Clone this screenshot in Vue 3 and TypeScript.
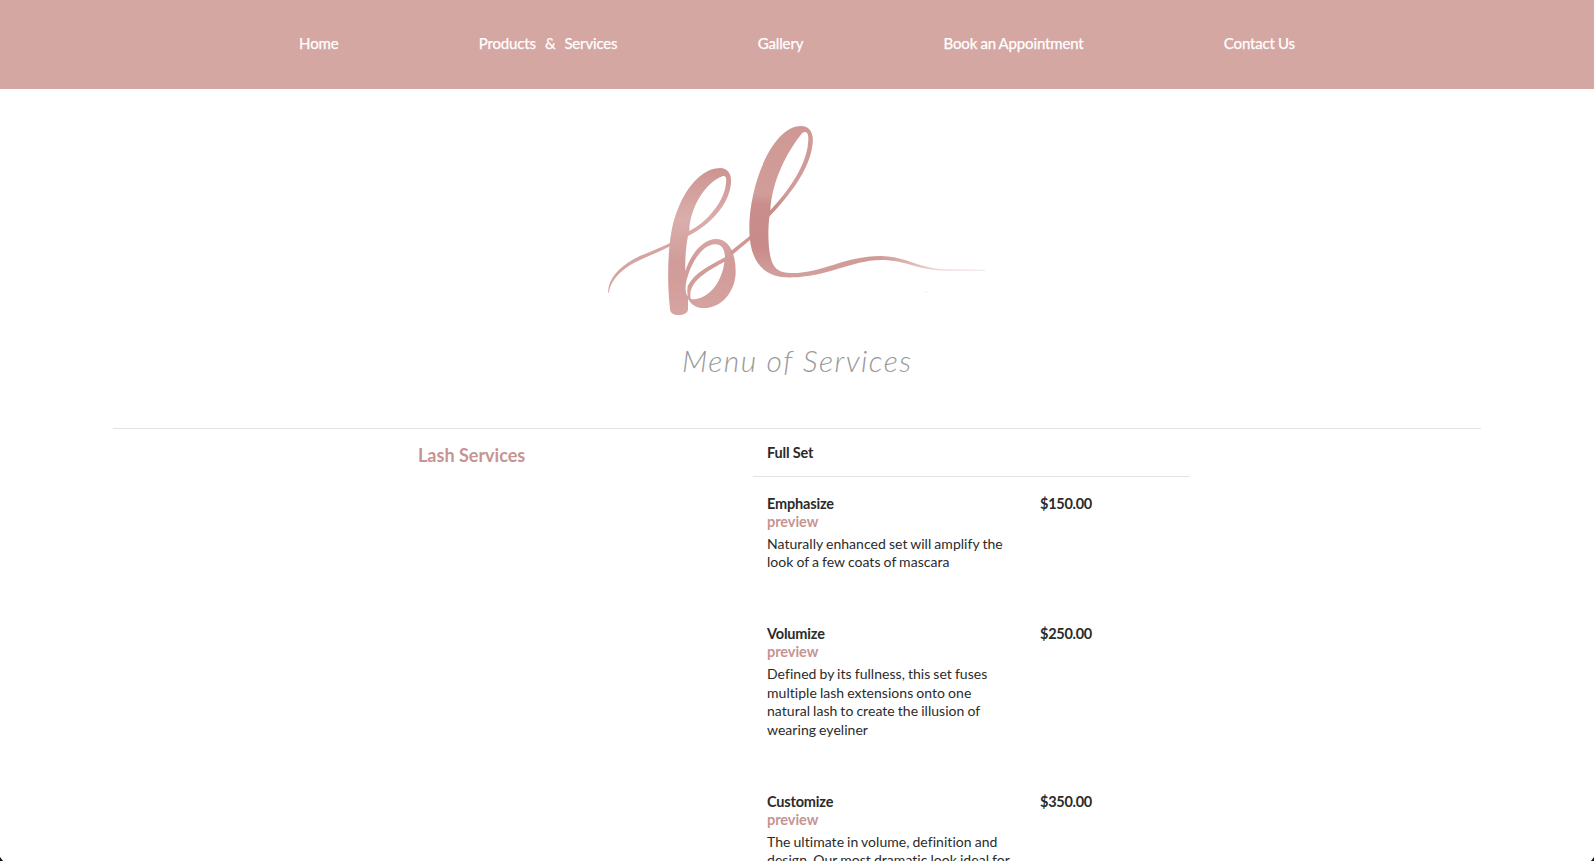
<script setup lang="ts">
interface Service {
  name: string
  price: string
  description: string
}

const links: string[] = ['Home', 'Products\u00a0 &\u00a0 Services', 'Gallery', 'Book an Appointment', 'Contact Us']

const services: Service[] = [
  { name: 'Emphasize', price: '$150.00', description: 'Naturally enhanced set will amplify the look of a few coats of mascara' },
  { name: 'Volumize', price: '$250.00', description: 'Defined by its fullness, this set fuses multiple lash extensions onto one natural lash to create the illusion of wearing eyeliner' },
  { name: 'Customize', price: '$350.00', description: 'The ultimate in volume, definition and design. Our most dramatic look ideal for' },
]
</script>

<template>
  <div class="page">
    <nav class="nav">
      <a v-for="link in links" :key="link" class="nav-link" :class="{ wide: link.includes('&') }">{{ link }}</a>
    </nav>
    <header class="brand">
      <svg class="logo" viewBox="0 0 1200 630" aria-label="bl">
        <defs>
          <linearGradient id="rose-b" x1="0" y1="159" x2="0" y2="600" gradientUnits="userSpaceOnUse">
            <stop offset="0" stop-color="#cc9491" />
            <stop offset=".35" stop-color="#dbaeab" />
            <stop offset=".65" stop-color="#d09b98" />
            <stop offset="1" stop-color="#d6a4a1" />
          </linearGradient>
          <linearGradient id="rose-l" x1="0" y1="33" x2="0" y2="487" gradientUnits="userSpaceOnUse">
            <stop offset="0" stop-color="#cf9895" />
            <stop offset=".45" stop-color="#d19d99" />
            <stop offset=".52" stop-color="#c98d8b" />
            <stop offset=".8" stop-color="#c88b89" />
            <stop offset="1" stop-color="#d3a09d" />
          </linearGradient>
          <linearGradient id="rose-tail" x1="570" y1="0" x2="1156" y2="0" gradientUnits="userSpaceOnUse">
            <stop offset="0" stop-color="#d3a09d" />
            <stop offset=".45" stop-color="#cf9a97" />
            <stop offset=".6" stop-color="#dcb3b0" />
            <stop offset=".78" stop-color="#efdcda" />
            <stop offset="1" stop-color="#f3e6e5" />
          </linearGradient>
        </defs>
        <path fill="#d5a5a2" d="M24 534 C25 490 56 458 102 432 C140 412 177 401 212 383 L212 393 C176 411 140 425 106 442 C68 462 35 489 26 533Z" />
        <path
          fill="url(#rose-b)" fill-rule="evenodd"
          d="M210 582 C202 510 202 420 214 352 C230 260 287 160 360 159 C385 160 395 178 393 203 C389 265 334 328 264 363 C257 400 255 435 256 468 C275 410 313 372 348 372 C389 372 407 417 407 470 C407 527 367 579 312 579 C289 579 272 568 264 551 L264 582 C264 595 251 600 236 600 C220 600 211 595 210 582Z
             M268 348 C269 284 312 205 367 184 C377 180 380 187 378 205 C373 262 317 325 268 348Z
             M257 512 C264 459 302 389 345 388 C364 387 374 402 375 427 C330 451 285 472 264 511 C261 518 262 530 263 544 C257 535 256 524 257 512Z
             M271 542 C270 492 335 462 373 440 C368 495 330 553 276 553 C272 552 271 548 271 542Z"
        />
        <path fill="#d09895" d="M390 410 L452 361 L453 373 L397 419Z" />
        <path
          fill="url(#rose-l)" fill-rule="evenodd"
          d="M603 33 C631 33 643 57 637 92 C628 165 567 243 508 305 C503 350 504 410 516 441 C525 464 543 475 576 474 L576 487 C495 490 450 445 448 348 C445 215 516 33 603 33Z
             M511 286 C516 198 560 112 606 55 C616 47 624 50 625 68 C626 145 565 228 511 286Z"
        />
        <path fill="url(#rose-tail)" d="M568 474 C660 478 729 424 842 423 C922 424 956 463 1045 463 L1156 464 L1156 467 L1035 467 C953 466 920 435 842 435 C755 436 672 489 568 487Z" />
        <circle cx="979" cy="531" r="2" fill="#dedede" />
      </svg>
      <svg class="tagline" viewBox="0 0 250 60">
        <text x="12" y="42" textLength="229" lengthAdjust="spacing">Menu of Services</text>
      </svg>
    </header>
    <main class="menu">
      <h2 class="category">Lash Services</h2>
      <section class="set">
        <h3 class="set-title">Full Set</h3>
        <article v-for="service in services" :key="service.name" class="service">
          <div class="details">
            <h4 class="name">{{ service.name }}</h4>
            <a class="preview">preview</a>
            <p class="description">{{ service.description }}</p>
          </div>
          <span class="price">{{ service.price }}</span>
        </article>
      </section>
    </main>
    <i class="corner left"></i>
    <i class="corner right"></i>
  </div>
</template>

<style>
body { margin: 0; overflow: hidden; }
</style>

<style scoped>
.page {
  position: relative;
  height: 861px;
  overflow: hidden;
  background: #fff;
  color: #2b2b2b;
  font-family: Lato, "Liberation Sans", sans-serif;
  font-size: 14px;
  line-height: 18.6px;
}
.nav {
  display: flex;
  justify-content: center;
  gap: 140.3px;
  height: 89px;
  padding-top: 34px;
  box-sizing: border-box;
  background: #d4a7a3;
  color: #fff;
  font-size: 15px;
  letter-spacing: -0.15px;
  word-spacing: -0.5px;
  -webkit-text-stroke: 0.25px #fff;
}
.nav-link { white-space: nowrap; }
.wide { word-spacing: 0.8px; }
.brand {
  display: flex;
  flex-direction: column;
  height: 339px;
  padding-top: 26px;
  box-sizing: border-box;
}
.logo {
  flex: none;
  width: 400px;
  height: 210px;
  margin-left: 600px;
}
.tagline {
  flex: none;
  width: 250px;
  height: 60px;
  margin: 5px 0 0 670px;
}
.tagline text {
  font-family: Lato, sans-serif;
  font-size: 30px;
  font-style: italic;
  font-weight: 300;
  fill: #999;
}
.menu {
  display: grid;
  grid-template-columns: 640px 437px;
  margin: 0 113px;
  border-top: 1px solid #e2e2e2;
}
h2, h3, h4, p { margin: 0; }
.category {
  padding: 14px 0 0 305px;
  color: #c79491;
  font-size: 18px;
  line-height: 24px;
}
.set-title {
  height: 48px;
  padding: 15px 0 0 14px;
  box-sizing: border-box;
  border-bottom: 1px solid #e2e2e2;
  font-size: 14.5px;
  letter-spacing: -0.18px;
}
.service {
  display: grid;
  grid-template-columns: 273px 1fr;
  height: 130.4px;
  padding: 18px 0 0 14px;
  box-sizing: border-box;
}
.service:nth-of-type(2) { height: 167.6px; }
.details { width: 248px; }
.name, .preview, .price {
  display: block;
  font-size: 14.5px;
  font-weight: 700;
  letter-spacing: -0.18px;
}
.name { height: 17.8px; }
.price { letter-spacing: -0.27px; }
.preview {
  color: #c79491;
  letter-spacing: -0.05px;
}
.description {
  margin-top: 3.4px;
  letter-spacing: 0.04px;
  word-spacing: -0.6px;
}
.corner {
  position: absolute;
  bottom: 0;
  width: 3px;
  height: 4px;
  background: #111;
}
.left { left: 0; clip-path: polygon(0 0, 100% 100%, 0 100%); }
.right { right: 0; clip-path: polygon(100% 0, 100% 100%, 0 100%); }
</style>
